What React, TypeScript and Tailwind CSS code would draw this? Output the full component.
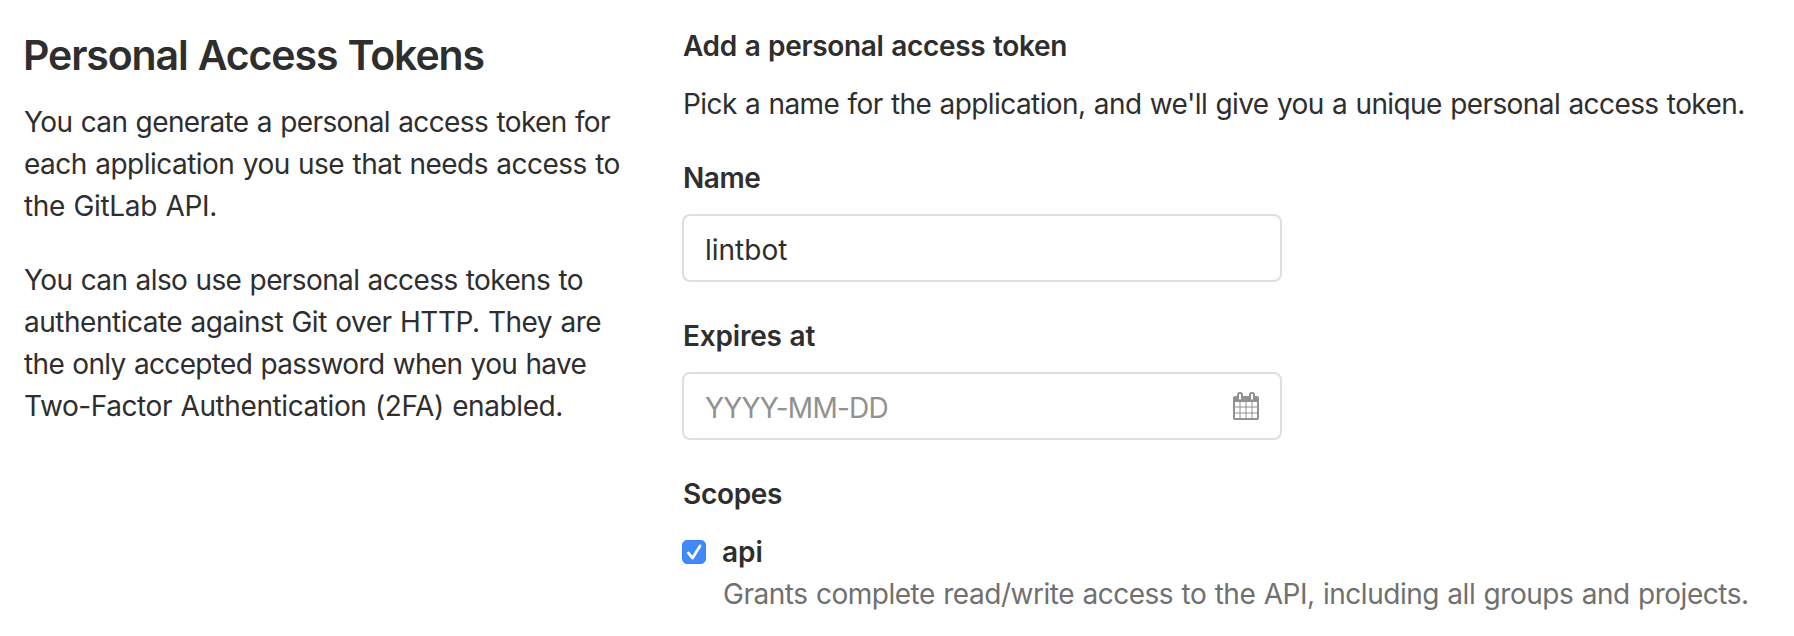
const CALENDAR_PATH = [
  "M192 1664h288v-288h-288z",
  "M544 1664h320v-288h-320z",
  "M928 1664h320v-288h-320z",
  "M1312 1664h288v-288h-288z",
  "M192 1312h288v-320h-288z",
  "M544 1312h320v-320h-320z",
  "M928 1312h320v-320h-320z",
  "M1312 1312h288v-320h-288z",
  "M192 928h288v-288h-288z",
  "M544 928h320v-288h-320z",
  "M928 928h320v-288h-320z",
  "M1312 928h288v-288h-288z",
  "M576 448v-288q0-13-9.500-22.500t-22.500-9.500h-64q-13 0-22.500 9.500t-9.500 22.500v288q0 13 9.500 22.500t22.500 9.500h64q13 0 22.500-9.500t9.500-22.500z",
  "M1344 448v-288q0-13-9.500-22.500t-22.500-9.500h-64q-13 0-22.500 9.500t-9.500 22.500v288q0 13 9.500 22.500t22.500 9.500h64q13 0 22.500-9.500t9.500-22.500z",
  "M1728 384v1280q0 52-38 90t-90 38h-1408q-52 0-90-38t-38-90v-1280q0-52 38-90t90-38h128v-96q0-66 47-113t113-47h64q66 0 113 47t47 113v96h384v-96q0-66 47-113t113-47h64q66 0 113 47t47 113v96h128q52 0 90 38t38 90z",
].join("");

function CalendarIcon() {
  return (
    <svg viewBox="64 0 1664 1792" className="h-7 w-[26px] shrink-0" aria-hidden="true">
      <path d={CALENDAR_PATH} fill="#919191" fillRule="evenodd" />
    </svg>
  );
}

function Checkbox() {
  return (
    <span
      role="checkbox"
      aria-checked="true"
      className="flex size-6 shrink-0 items-center justify-center rounded-[5px] border border-[#3b82f0] bg-[#3f8af8]"
    >
      <svg viewBox="0 0 24 24" className="size-6 shrink-0" fill="none" aria-hidden="true">
        <path
          d="M6.300 13l4.300 5L18 6"
          stroke="white"
          strokeWidth="2.700"
          strokeLinecap="round"
          strokeLinejoin="round"
        />
      </svg>
    </span>
  );
}

function Intro() {
  return (
    <section className="w-[658px] shrink-0 pt-[30px]">
      <h1 className="-ml-px mb-[21px] text-[41px] leading-[50px] font-semibold tracking-[-1.12px]">
        Personal Access Tokens
      </h1>
      <p className="mb-8">
        <span className="block tracking-[-0.61px]">You can generate a personal access token for</span>
        <span className="block tracking-[-0.515px]">each application you use that needs access to</span>
        <span className="block tracking-[-0.35px]">the GitLab API.</span>
      </p>
      <p>
        <span className="block tracking-[-0.61px]">You can also use personal access tokens to</span>
        <span className="block tracking-[-0.485px]">authenticate against Git over HTTP. They are</span>
        <span className="block tracking-[-0.65px]">the only accepted password when you have</span>
        <span className="block tracking-[-0.41px]">Two-Factor Authentication (2FA) enabled.</span>
      </p>
    </section>
  );
}

function TokenForm() {
  return (
    <section className="w-[1112px] shrink-0 pt-[25px]">
      <h2 className="mb-4 pl-px font-semibold tracking-[-0.33px]">Add a personal access token</h2>
      <p className="mb-8 pl-px tracking-[-0.58px]">
        Pick a name for the application, and we'll give you a unique personal access token.
      </p>

      <div className="mb-[33px] w-[600px]">
        <div className="mb-[15px] pl-px font-semibold tracking-[-0.45px]">Name</div>
        <div className="flex h-[68px] items-center rounded-lg border-2 border-[#dfdfdf] px-[21px] pt-1">
          <span>lintbot</span>
        </div>
      </div>

      <div className="mb-[33px] w-[600px]">
        <div className="mb-[15px] pl-px font-semibold tracking-[-0.2px]">Expires at</div>
        <div className="flex h-[68px] items-center justify-between rounded-lg border-2 border-[#dfdfdf] px-[21px]">
          <span className="pt-1 tracking-[-0.761px] text-[#919191]">YYYY-MM-DD</span>
          <CalendarIcon />
        </div>
      </div>

      <div className="mb-4 pl-px font-semibold tracking-[-0.3px]">Scopes</div>
      <div className="flex items-center gap-4">
        <Checkbox />
        <span className="font-semibold">api</span>
      </div>
      <p className="pl-[41px] tracking-[-0.477px] text-[#707070]">
        Grants complete read/write access to the API, including all groups and projects.
      </p>
    </section>
  );
}

export default function App() {
  return (
    <main className="flex h-[636px] w-[1794px] overflow-hidden bg-white pl-6 font-['Inter',sans-serif] text-[28px] leading-[42px] [word-spacing:1px] whitespace-nowrap text-[#2e2e2e]">
      <Intro />
      <TokenForm />
    </main>
  );
}
